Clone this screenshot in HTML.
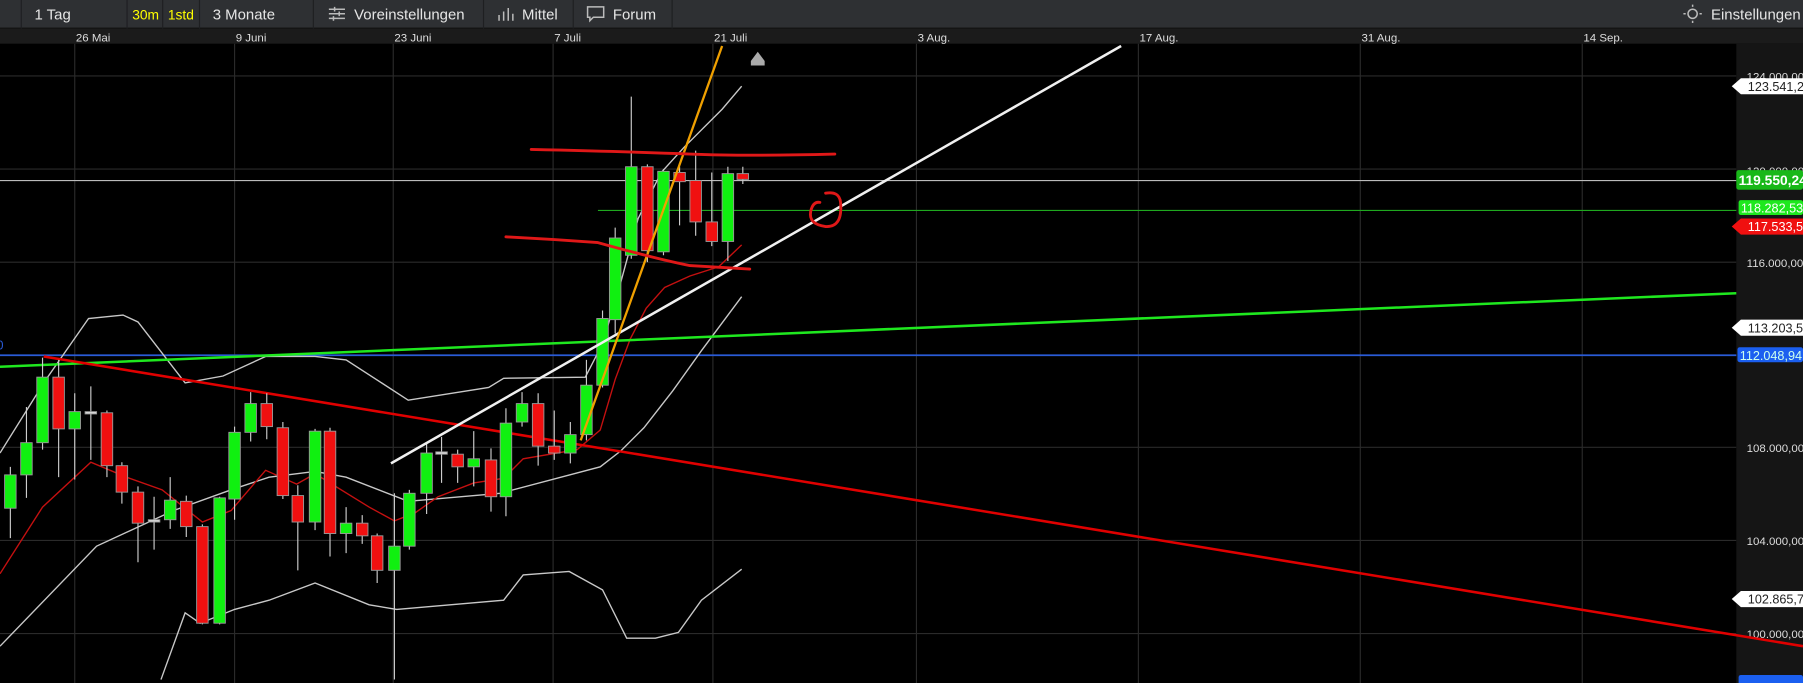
<!DOCTYPE html>
<html><head><meta charset="utf-8"><style>
html,body{margin:0;padding:0;background:#000;width:1803px;height:683px;overflow:hidden}
svg{display:block}
text{font-family:"Liberation Sans",sans-serif}
</style></head><body>
<svg width="1803" height="683" viewBox="0 0 1568 594" preserveAspectRatio="none" xmlns="http://www.w3.org/2000/svg">
<rect width="1568" height="594" fill="#000"/>
<!-- toolbar -->
<rect x="0" y="0" width="1568" height="25" fill="#2e3033"/>
<rect x="0" y="24" width="1568" height="1" fill="#111"/>
<g fill="#1e1f21">
<rect x="18" y="0" width="1" height="25"/><rect x="110" y="0" width="1" height="25"/><rect x="141" y="0" width="1" height="25"/><rect x="173" y="0" width="1" height="25"/><rect x="272" y="0" width="1" height="25"/><rect x="420" y="0" width="1" height="25"/><rect x="498" y="0" width="1" height="25"/><rect x="584" y="0" width="1" height="25"/>
</g>
<g font-size="13" fill="#e6e6e6">
<text x="30" y="17">1 Tag</text>
<text x="115" y="17" fill="#ffff00" font-size="12">30m</text>
<text x="146" y="17" fill="#ffff00" font-size="12">1std</text>
<text x="185" y="17">3 Monate</text>
<text x="308" y="17">Voreinstellungen</text>
<text x="454" y="17">Mittel</text>
<text x="533" y="17">Forum</text>
<text x="1488" y="17">Einstellungen</text>
</g>
<g stroke="#bbb" stroke-width="1.3" fill="none">
<path d="M286 8h14M286 12h14M286 16h14M291 6v4M295 10v4M290 14v4"/>
<path d="M434 18v-5M438 18v-8M442 18v-11M446 18v-6"/>
<path d="M511 6h14v9h-9l-3 3v-3h-2z"/>
<circle cx="1472" cy="12" r="4"/><path d="M1466 12h-2M1478 12h2M1472 6v-2M1472 18v2"/>
</g>
<!-- date axis -->
<rect x="0" y="25" width="1568" height="13" fill="#1b1b1b"/>
<g font-size="10" fill="#ddd">
<text x="66" y="36">26 Mai</text><text x="205" y="36">9 Juni</text><text x="343" y="36">23 Juni</text><text x="482" y="36">7 Juli</text><text x="621" y="36">21 Juli</text><text x="798" y="36">3 Aug.</text><text x="991" y="36">17 Aug.</text><text x="1184" y="36">31 Aug.</text><text x="1377" y="36">14 Sep.</text>
</g>
<!-- grid -->
<g stroke="#2a2a2a" stroke-width="1">
<path d="M65 38V594M204 38V594M342 38V594M481 38V594M620 38V594M797 38V594M990 38V594M1183 38V594M1376 38V594"/>
<path d="M0 66H1510M0 147H1510M0 228H1510M0 309H1510M0 389H1510M0 470H1510M0 551H1510"/>
</g>
<!-- right axis -->
<rect x="1510" y="38" width="58" height="556" fill="#151515"/>
<g font-size="10" fill="#ddd">
<text x="1519" y="70">124.000,00</text><text x="1519" y="152">120.000,00</text><text x="1519" y="232">116.000,00</text><text x="1519" y="393">108.000,00</text><text x="1519" y="474">104.000,00</text><text x="1519" y="555">100.000,00</text>
</g>
<!-- horizontal lines -->
<line x1="0" y1="157" x2="1510" y2="157" stroke="#bbb" stroke-width="1"/>
<line x1="520" y1="183" x2="1510" y2="183" stroke="#1fa81f" stroke-width="1"/>
<line x1="0" y1="309" x2="1510" y2="309" stroke="#2a5bd7" stroke-width="1.5"/>
<text x="-3" y="304" font-size="11" fill="#2a5bd7">0</text>
<!-- bollinger -->
<g fill="none" stroke="#c8c8c8" stroke-width="1.2">
<polyline points="0,394 40,330 77,277 107,274 120,280 161,333 194,327 231,310 274,310 301,313 355,348 425,337 438,329 509,328 524,299 540,245 555,190 575,150 595,128 610,113 628,95 645,75"/>
<polyline points="0,562 84,475 151,444 201,426 234,415 274,410 301,415 355,436 435,429 522,406 540,392 560,372 585,340 610,305 645,258"/>
<polyline points="140,591 161,533 174,542 204,530 234,522 274,507 321,526 345,530 438,522 455,500 495,497 524,513 545,555 570,555 590,550 610,522 645,495"/>
</g>
<polyline fill="none" stroke="#c41010" stroke-width="1.2" points="0,499 37,441 79,402 110,415 141,426 176,454 201,444 231,409 258,421 274,412 321,441 343,453 361,446 381,432 412,420 438,416 455,399 502,391 522,374 535,330 548,295 562,268 578,250 600,240 625,232 645,213"/>
<!-- trend lines -->
<line x1="0" y1="319" x2="1510" y2="255" stroke="#1fe81f" stroke-width="2.2"/>
<line x1="38" y1="310" x2="1568" y2="562" stroke="#e00000" stroke-width="2.2"/>
<!-- candles -->
<g stroke="#ccc" stroke-width="1">
<path d="M9 406V468M23 354V433M37 311V391M51 313V415M65 342V417M79 336V400M93 357V415M106 402V438M120 423V489M134 432V478M148 415V460M162 431V467M176 456V543M191 432V543M204 371V452M218 341V384M232 342V382M246 367V434M259 422V496M274 373V461M287 372V484M301 441V481M315 448V473M328 464V507M343 429V591M356 426V478M371 386V447M384 380V420M398 391V420M412 375V423M427 390V445M440 355V449M454 341V371M468 342V405M482 357V400M496 367V403M510 313V383M524 270V337M535 198V290M549 84V225M563 143V228M577 147V222M591 145V196M605 131V205M619 150V214M633 145V227M646 145V160"/>
</g>
<g stroke="#999" stroke-width="0.8">
<g fill="#10f010">
<rect x="4" y="413" width="10" height="29"/><rect x="18" y="385" width="10" height="28"/><rect x="32" y="328" width="10" height="57"/><rect x="60" y="358" width="10" height="15"/><rect x="143" y="435" width="10" height="17"/><rect x="186" y="433" width="10" height="109"/><rect x="199" y="376" width="10" height="58"/><rect x="213" y="351" width="10" height="25"/><rect x="269" y="375" width="10" height="79"/><rect x="296" y="455" width="10" height="9"/><rect x="338" y="475" width="10" height="21"/><rect x="351" y="429" width="10" height="46"/><rect x="366" y="394" width="10" height="35"/><rect x="407" y="399" width="10" height="7"/><rect x="435" y="368" width="10" height="64"/><rect x="449" y="351" width="10" height="16"/><rect x="491" y="378" width="10" height="16"/><rect x="505" y="335" width="10" height="43"/><rect x="519" y="277" width="10" height="58"/><rect x="530" y="207" width="10" height="71"/><rect x="544" y="145" width="10" height="77"/><rect x="572" y="149" width="10" height="70"/><rect x="628" y="151" width="10" height="59"/>
</g>
<g fill="#f01010">
<rect x="46" y="328" width="10" height="45"/><rect x="88" y="359" width="10" height="46"/><rect x="101" y="405" width="10" height="23"/><rect x="115" y="428" width="10" height="27"/><rect x="157" y="436" width="10" height="22"/><rect x="171" y="458" width="10" height="84"/><rect x="227" y="351" width="10" height="20"/><rect x="241" y="372" width="10" height="59"/><rect x="254" y="431" width="10" height="23"/><rect x="282" y="375" width="10" height="89"/><rect x="310" y="455" width="10" height="11"/><rect x="323" y="466" width="10" height="30"/><rect x="393" y="395" width="10" height="11"/><rect x="422" y="400" width="10" height="32"/><rect x="463" y="351" width="10" height="37"/><rect x="477" y="388" width="10" height="6"/><rect x="558" y="145" width="10" height="73"/><rect x="586" y="150" width="10" height="8"/><rect x="600" y="157" width="10" height="36"/><rect x="614" y="193" width="10" height="17"/><rect x="641" y="151" width="10" height="5"/>
</g>
<g fill="#ddd"><rect x="74" y="358" width="10" height="2"/><rect x="129" y="452" width="10" height="2"/><rect x="379" y="393" width="10" height="2"/></g>
</g>
<!-- drawn lines -->
<line x1="340" y1="403" x2="975" y2="40" stroke="#f0f0f0" stroke-width="2.2"/>
<line x1="505" y1="383" x2="628" y2="40" stroke="#f0a000" stroke-width="2"/>
<g fill="none" stroke="#e01818" stroke-width="2.5" stroke-linecap="round">
<path d="M462 130 Q550 132 600 134 T726 134"/>
<path d="M440 206 Q480 208 520 211 Q570 225 600 231 L652 234"/>
<path d="M718 168 Q730 166 731 176 Q733 198 718 197 Q703 195 705 184 Q707 175 713 176"/>
</g>
<path d="M653 53 L659 45 L665 53 V57 H653Z" fill="#aaa"/>
<!-- axis labels -->
<g font-size="11">
<path d="M1506 75 L1514 68 H1568 V82 H1514Z" fill="#fff"/><text x="1520" y="79" fill="#222">123.541,2</text>
<rect x="1510" y="148" width="58" height="17" rx="2" fill="#18b818"/><text x="1512" y="161" fill="#fff" font-weight="bold" font-size="12">119.550,24</text>
<rect x="1512" y="174" width="56" height="13" rx="2" fill="#1ee81e"/><text x="1514" y="185" fill="#fff">118.282,53</text>
<path d="M1506 197 L1514 190 H1568 V204 H1514Z" fill="#f01010"/><text x="1520" y="201" fill="#fff">117.533,5</text>
<path d="M1506 285 L1514 278 H1568 V292 H1514Z" fill="#fff"/><text x="1520" y="289" fill="#222">113.203,5</text>
<rect x="1511" y="302" width="57" height="13" rx="2" fill="#1b5ff0"/><text x="1513" y="313" fill="#cfe">112.048,94</text>
<path d="M1506 521 L1514 514 H1568 V528 H1514Z" fill="#fff"/><text x="1520" y="525" fill="#222">102.865,7</text>
<rect x="1512" y="587" width="56" height="10" rx="2" fill="#1b5ff0"/>
</g>
</svg>
</body></html>
